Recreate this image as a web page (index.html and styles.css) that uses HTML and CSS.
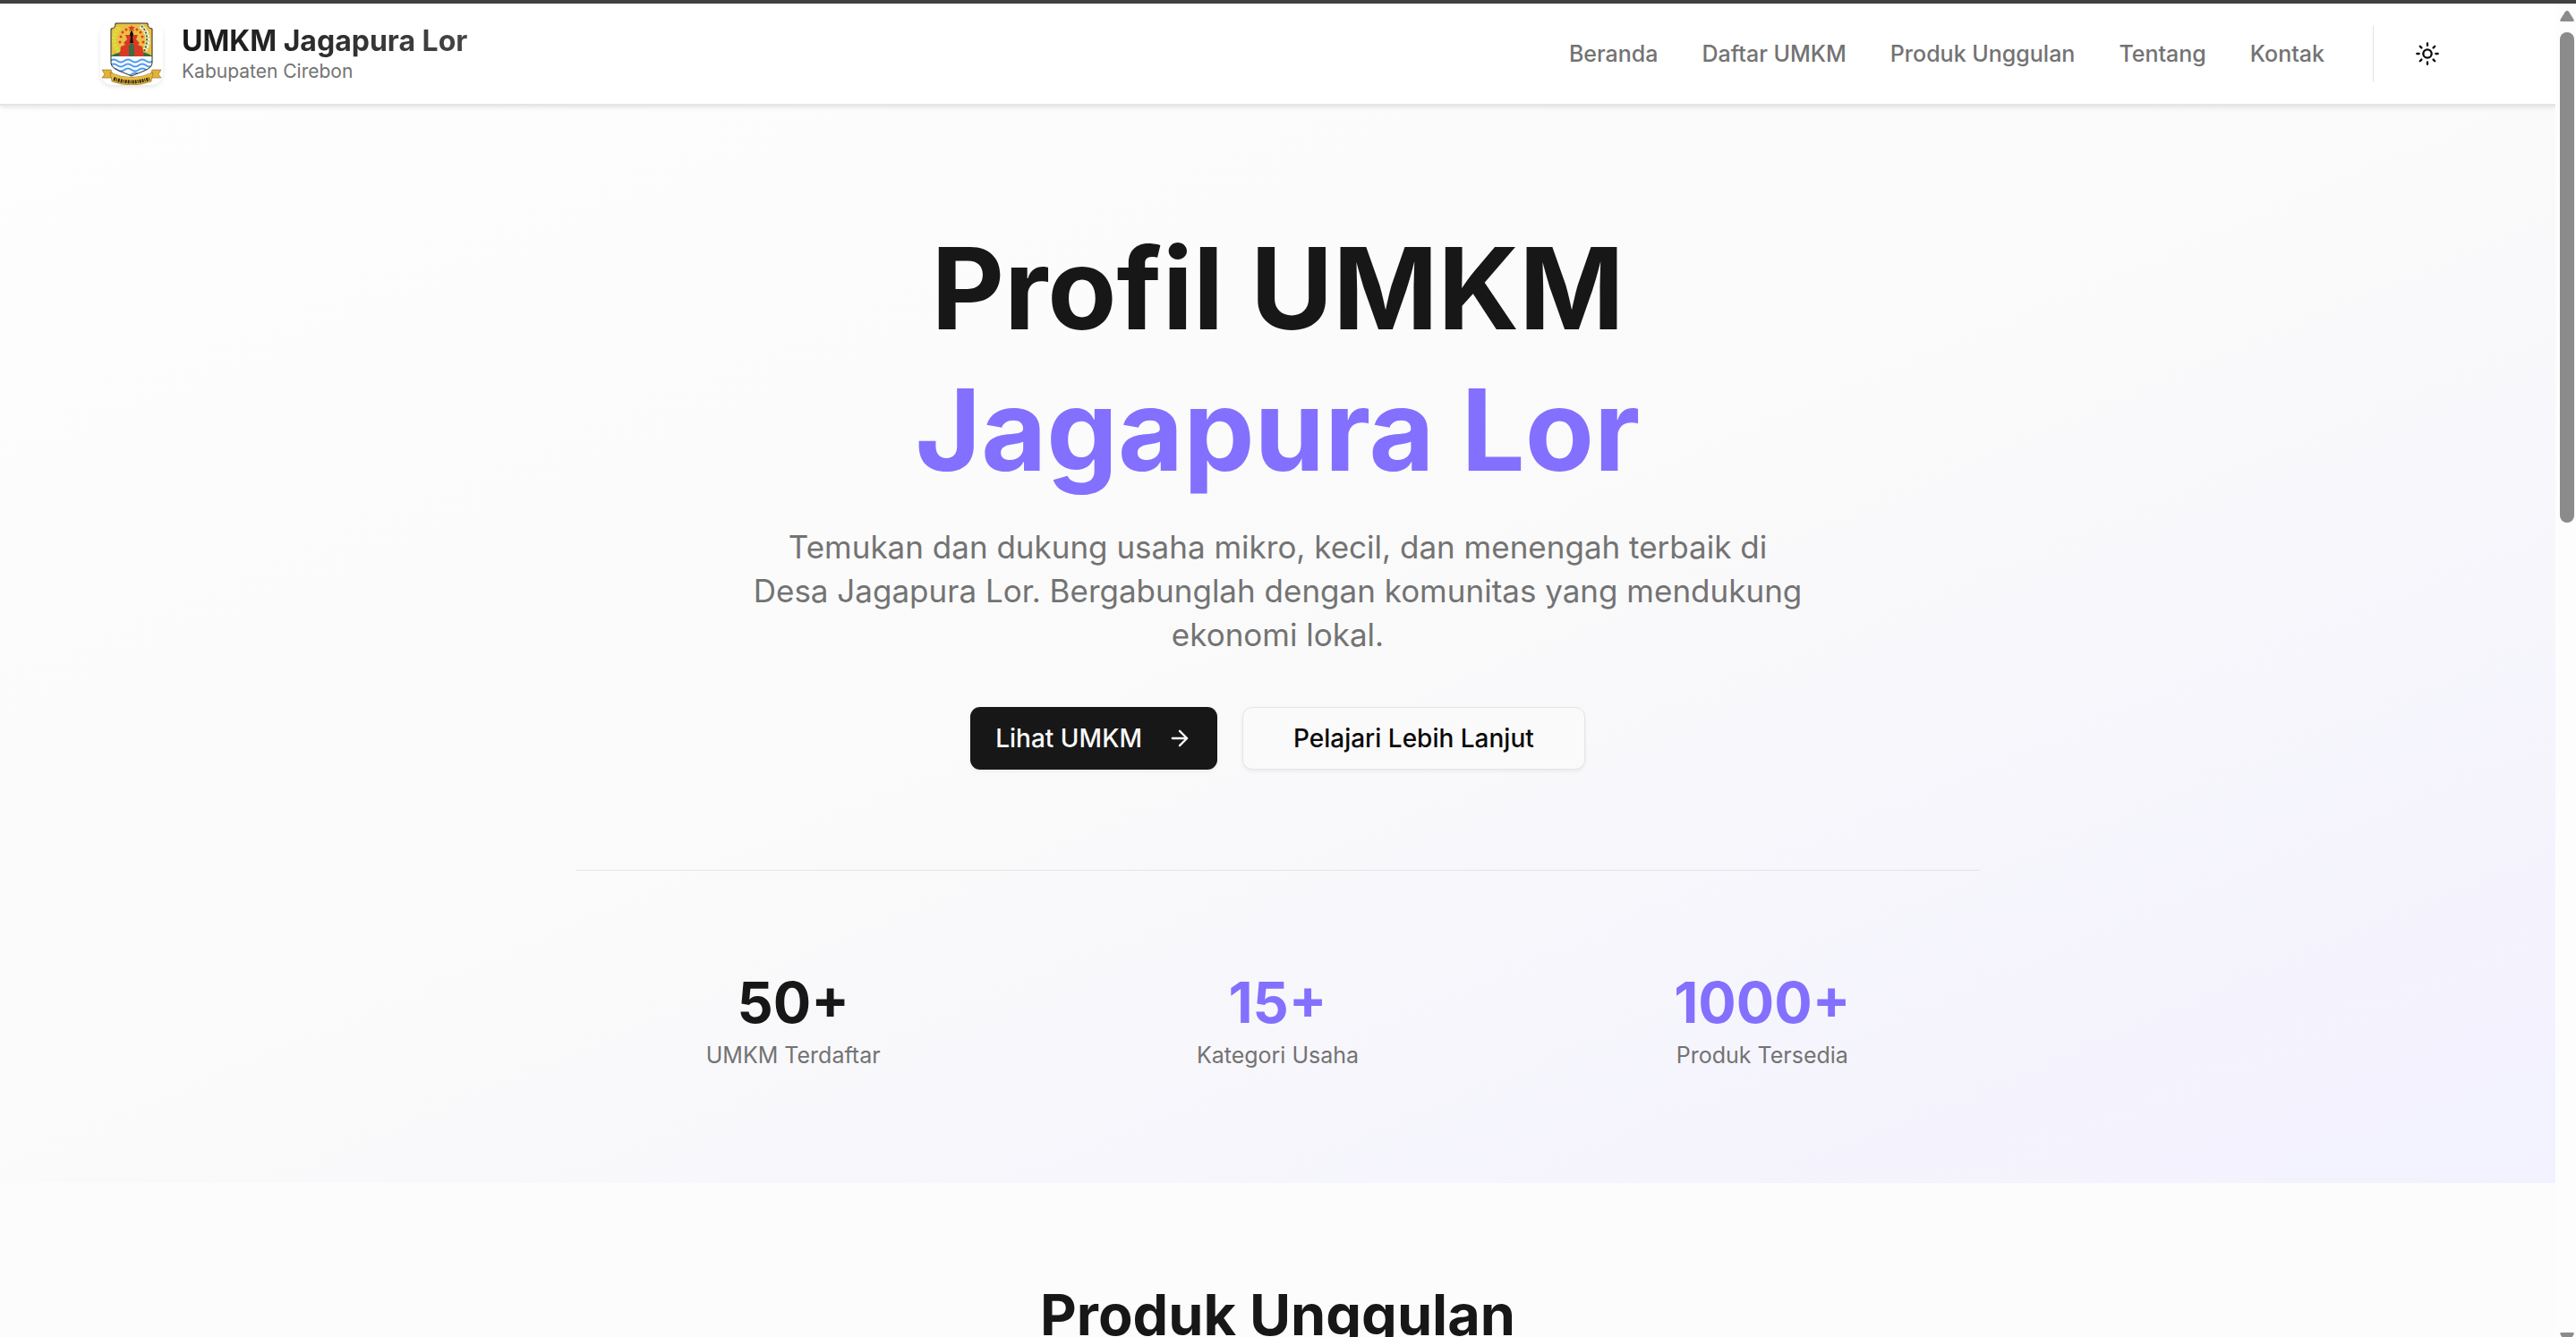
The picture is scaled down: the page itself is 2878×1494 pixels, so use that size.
FILE: index.html
```html
<!DOCTYPE html>
<html lang="id">
<head>
<meta charset="utf-8">
<meta name="viewport" content="width=device-width, initial-scale=1">
<title>UMKM Jagapura Lor</title>
<link rel="stylesheet" href="styles.css">
</head>
<body>
<div class="window">
  <div class="page">
    <header class="header">
      <a class="brand" href="#">
        <svg class="brand-logo" viewBox="0 0 70 70" aria-hidden="true">
          <rect width="70" height="70" fill="#fff"/>
          <clipPath id="shield"><path d="M17 1H53Q53 7 58 7V45C58 53 45 55 35 60C25 55 12 53 12 45V7Q17 7 17 1Z"/></clipPath>
          <g clip-path="url(#shield)">
            <rect x="10" width="50" height="40" fill="#e9bf45"/>
            <path d="M11 38Q22 31 35 33Q48 31 59 38Z" fill="#2f6f43"/>
            <path d="M21 38L23 27L28 25L26 23L30 19L28 14H33L35 10L37 14H42L40 19L44 23L42 25L47 27L49 38Z" fill="#d83a24"/>
            <path d="M32 38V26L35 23L38 26V38Z" fill="#3d6b43"/>
            <path d="M35 8L37 13L36 17L37 23H33L34 17L33 13Z" fill="#111"/>
            <rect x="10" y="38" width="50" height="24" fill="#f7fbff"/>
            <g fill="none" stroke="#4b98f0" stroke-width="2">
              <path d="M11 43q4-3 8 0t8 0t8 0t8 0t8 0t8 0"/>
              <path d="M11 48q4-3 8 0t8 0t8 0t8 0t8 0t8 0"/>
              <path d="M11 53q4-3 8 0t8 0t8 0t8 0t8 0t8 0"/>
              <path d="M19 58q4-3 8 0t8 0t8 0t8 0"/>
            </g>
            <path d="M22 6C13 12 14 25 21 33" fill="none" stroke="#d8df3c" stroke-width="5" stroke-dasharray="3 1"/>
            <path d="M45 4C54 10 55 22 50 31" fill="none" stroke="#f3f6e8" stroke-width="5" stroke-dasharray="3 1"/>
            <path d="M46 4C53 10 54 22 49 32" fill="none" stroke="#2f6f43" stroke-width="2" stroke-dasharray="2 2"/>
            <path d="M35 3l1 2h3l-2 2 1 3-3-2-3 2 1-3-2-2h3z" fill="#e23a22"/>
            <g fill="#e23a22"><circle cx="29" cy="8" r="1.500"/><circle cx="25" cy="11" r="1.500"/><circle cx="23" cy="16" r="1.500"/><circle cx="22" cy="22" r="1.500"/><circle cx="41" cy="8" r="1.500"/><circle cx="45" cy="11" r="1.500"/><circle cx="47" cy="16" r="1.500"/><circle cx="48" cy="22" r="1.500"/></g>
          </g>
          <path d="M17 1H53Q53 7 58 7V45C58 53 45 55 35 60C25 55 12 53 12 45V7Q17 7 17 1Z" fill="none" stroke="#2b2a1c"/>
          <path d="M2 53H12L15 62H2L5 58ZM68 53H58L55 62H68L65 58Z" fill="#e3b23a" stroke="#8c6a1c" stroke-width=".6"/>
          <path d="M11 56Q35 67 59 56L57 66Q35 74 13 66Z" fill="#e9bc40" stroke="#8c6a1c" stroke-width=".6"/>
          <path d="M15 63Q35 70 55 63" fill="none" stroke="#2b2412" stroke-width="4" stroke-dasharray="2 1 1 1 2 1"/>
        </svg>
        <span class="brand-text">
          <span class="brand-name">UMKM Jagapura Lor</span>
          <span class="brand-region">Kabupaten Cirebon</span>
        </span>
      </a>
      <div class="header-end">
        <nav class="nav">
          <a href="#beranda">Beranda</a>
          <a href="#umkm">Daftar UMKM</a>
          <a href="#produk">Produk Unggulan</a>
          <a href="#tentang">Tentang</a>
          <a href="#kontak">Kontak</a>
        </nav>
        <div class="theme">
          <button class="theme-button" type="button" aria-label="Ganti tema">
            <svg class="icon" viewBox="0 0 24 24" aria-hidden="true"><circle cx="12" cy="12" r="4"/><path d="M12 2v2M12 20v2M4.930 4.930l1.410 1.410M17.660 17.660l1.410 1.410M2 12h2M20 12h2M6.340 17.660l-1.410 1.410M19.070 4.930l-1.410 1.410"/></svg>
          </button>
        </div>
      </div>
    </header>
    <main>
      <section class="hero" id="beranda">
        <h1 class="hero-title">Profil UMKM <span class="accent">Jagapura Lor</span></h1>
        <p class="hero-lead">Temukan dan dukung usaha mikro, kecil, dan menengah terbaik di Desa Jagapura Lor. Bergabunglah dengan komunitas yang mendukung ekonomi lokal.</p>
        <div class="actions">
          <button class="button button-primary" type="button">Lihat UMKM
            <svg class="icon" viewBox="0 0 24 24" aria-hidden="true"><path d="M5 12h14M12 5l7 7-7 7"/></svg>
          </button>
          <button class="button button-outline" type="button">Pelajari Lebih Lanjut</button>
        </div>
        <div class="stats">
          <div class="stat"><span class="stat-value">50+</span><span class="stat-label">UMKM Terdaftar</span></div>
          <div class="stat"><span class="stat-value accent">15+</span><span class="stat-label">Kategori Usaha</span></div>
          <div class="stat"><span class="stat-value accent">1000+</span><span class="stat-label">Produk Tersedia</span></div>
        </div>
      </section>
      <section class="products" id="produk">
        <h2 class="section-title">Produk Unggulan</h2>
      </section>
    </main>
  </div>
  <div class="scrollbar" aria-hidden="true">
    <svg class="scroll-arrow" viewBox="0 0 16 12"><path d="M6 1Q8-1 10 1L15 9Q17 12 14 12H2Q-1 12 1 9Z"/></svg>
    <div class="scroll-track"><div class="scroll-thumb"></div></div>
    <svg class="scroll-arrow" viewBox="0 0 16 12"><path d="M6 11Q8 13 10 11L15 3Q17 0 14 0H2Q-1 0 1 3Z"/></svg>
  </div>
</div>
</body>
</html>
```
FILE: styles.css
```css
:root {
  --ink: #171717;
  --muted: #737373;
  --accent: #8370ff;
  --line: #e5e5e5;
  --surface: #fcfcfc;
}

* {
  box-sizing: border-box;
}

body {
  margin: 0;
  background: var(--surface);
  color: var(--ink);
  font-family: Inter, "Liberation Sans", sans-serif;
}

.window {
  display: flex;
  height: 100vh;
  border-top: 4px solid #404040;
  overflow: hidden;
}

.page {
  flex: 1;
  min-width: 0;
  overflow: hidden;
}

.header {
  position: relative;
  display: flex;
  align-items: center;
  justify-content: space-between;
  padding: 21px 112px;
  background: #fff;
  border-bottom: 2px solid var(--line);
  box-shadow: 0 2px 5px rgba(0, 0, 0, 0.1);
}

.brand {
  display: flex;
  align-items: center;
  gap: 21px;
  color: inherit;
  text-decoration: none;
}

.brand-logo {
  width: 70px;
  height: 70px;
  border-radius: 14px;
  box-shadow: 0 2px 5px rgba(0, 0, 0, 0.1);
}

.brand-text {
  display: flex;
  flex-direction: column;
}

.brand-name {
  font-size: 32px;
  font-weight: 700;
  line-height: 40px;
  background: linear-gradient(to right, #171717, #454545);
  background-clip: text;
  color: transparent;
}

.brand-region {
  font-size: 21px;
  line-height: 28px;
  color: var(--muted);
}

.header-end,
.nav {
  display: flex;
  align-items: center;
}

.header-end {
  gap: 54px;
}

.nav {
  gap: 49px;
}

.nav a {
  color: var(--muted);
  font-size: 25px;
  font-weight: 500;
  line-height: 35px;
  text-decoration: none;
}

.theme {
  padding-left: 28px;
  border-left: 1px solid var(--line);
}

.theme-button {
  display: flex;
  align-items: center;
  justify-content: center;
  width: 63px;
  height: 63px;
  padding: 0;
  border: 0;
  background: none;
  color: #0a0a0a;
}

.icon {
  width: 28px;
  height: 28px;
  fill: none;
  stroke: currentColor;
  stroke-width: 2;
  stroke-linecap: round;
  stroke-linejoin: round;
}

.hero {
  display: flex;
  flex-direction: column;
  align-items: center;
  padding: 125px 56px;
  background: linear-gradient(to bottom right, #fefefe, #fafafa 50%, #f2f1ff);
  text-align: center;
}

.hero-title {
  margin: 0;
  font-size: 126px;
  font-weight: 700;
  line-height: 158px;
}

.hero-title .accent {
  display: block;
}

.accent {
  color: var(--accent);
}

.hero-lead {
  max-width: 1176px;
  margin: 28px 0 56px;
  color: var(--muted);
  font-size: 35px;
  line-height: 49px;
}

.actions {
  display: flex;
  gap: 28px;
}

.button {
  display: flex;
  align-items: center;
  gap: 28px;
  height: 70px;
  border: 0;
  border-radius: 11px;
  box-shadow: 0 2px 4px rgba(0, 0, 0, 0.06);
  font-family: inherit;
  font-size: 28px;
  font-weight: 500;
  line-height: 42px;
}

.button-primary {
  padding: 0 28px;
  background: var(--ink);
  color: #fafafa;
}

.button-outline {
  padding: 0 56px;
  border: 1px solid var(--line);
  background: #fafafb;
  color: #0a0a0a;
}

.stats {
  display: grid;
  grid-template-columns: repeat(3, 1fr);
  gap: 56px;
  width: 100%;
  max-width: 1568px;
  margin-top: 112px;
  padding-top: 112px;
  border-top: 1px solid var(--line);
}

.stat {
  display: flex;
  flex-direction: column;
  gap: 7px;
}

.stat-value {
  font-size: 63px;
  font-weight: 700;
  line-height: 70px;
}

.stat-label {
  color: var(--muted);
  font-size: 25px;
  line-height: 35px;
}

.products {
  padding: 112px 56px;
  text-align: center;
}

.section-title {
  margin: 0;
  font-size: 63px;
  font-weight: 700;
  line-height: 70px;
}

.scrollbar {
  display: flex;
  flex-direction: column;
  align-items: center;
  gap: 12px;
  width: 23px;
  padding: 8px 2px 0 5px;
  background: #fdfdfd;
}

.scroll-arrow {
  flex: none;
  width: 16px;
  height: 12px;
  fill: #8b8b8b;
}

.scroll-arrow:last-child {
  margin-bottom: -7px;
}

.scroll-track {
  flex: 1;
  width: 100%;
}

.scroll-thumb {
  height: 38%;
  border-radius: 8px;
  background: #8b8b8b;
}
```
